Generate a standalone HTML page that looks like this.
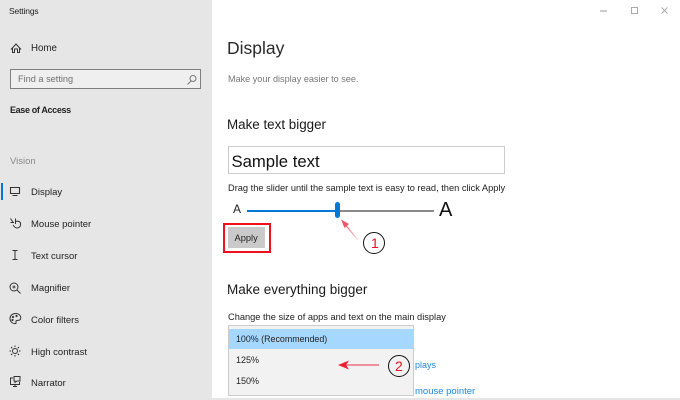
<!DOCTYPE html>
<html>
<head>
<meta charset="utf-8">
<style>
html,body{margin:0;padding:0;width:680px;height:400px;overflow:hidden;background:#fff}
body{position:relative;font-family:"Liberation Sans",sans-serif;color:#1a1a1a}
#wrap{position:absolute;left:0;top:0;width:680px;height:400px;filter:blur(.25px)}
.t{position:absolute;white-space:nowrap;line-height:1}
#side{position:absolute;left:0;top:0;width:212px;height:400px;background:#e6e6e6}
svg.abs{position:absolute;left:0;top:0}
</style>
</head>
<body>
<div id="wrap">
<div id="side"></div>
<div class="t" style="left:9px;top:7px;font-size:8.500px;letter-spacing:-.15px;color:#222">Settings</div>
<div class="t" style="left:31px;top:43.800px;font-size:9.700px;color:#222">Home</div>
<div style="position:absolute;left:10px;top:69px;width:189px;height:18px;border:1.5px solid #7f7f7f;background:#efefef"></div>
<div class="t" style="left:18px;top:74.500px;font-size:9.200px;color:#6f6f6f">Find a setting</div>
<div class="t" style="left:10px;top:106px;font-size:9px;font-weight:bold;color:#222;letter-spacing:-.35px">Ease of Access</div>
<div class="t" style="left:10px;top:157px;font-size:9.500px;color:#8a8a8a">Vision</div>
<div style="position:absolute;left:1px;top:183px;width:1.5px;height:17px;background:#0078d7"></div>
<div class="t" style="left:31px;top:187.500px;font-size:9.500px;color:#222">Display</div>
<div class="t" style="left:31px;top:219.500px;font-size:9.500px;color:#222">Mouse pointer</div>
<div class="t" style="left:31px;top:251.500px;font-size:9.500px;color:#222">Text cursor</div>
<div class="t" style="left:31px;top:283.500px;font-size:9.500px;color:#222">Magnifier</div>
<div class="t" style="left:31px;top:315.500px;font-size:9.500px;color:#222">Color filters</div>
<div class="t" style="left:31px;top:347.500px;font-size:9.500px;color:#222">High contrast</div>
<div class="t" style="left:31px;top:378.500px;font-size:9.500px;color:#222">Narrator</div>

<div class="t" style="left:227px;top:39.500px;font-size:17.500px;color:#2a2a2a">Display</div>
<div class="t" style="left:228px;top:75px;font-size:9.100px;color:#777">Make your display easier to see.</div>
<div class="t" style="left:227px;top:118px;font-size:13.400px;color:#1a1a1a">Make text bigger</div>
<div style="position:absolute;left:228px;top:146px;width:275px;height:26px;border:1.5px solid #ccc;background:#fff"></div>
<div class="t" style="left:231.500px;top:154px;font-size:16.700px;color:#111">Sample text</div>
<div class="t" style="left:228px;top:183.500px;font-size:9.270px;color:#222">Drag the slider until the sample text is easy to read, then click Apply</div>
<div class="t" style="left:233px;top:203px;font-size:12px;color:#222">A</div>
<div class="t" style="left:439px;top:200px;font-size:20px;color:#111">A</div>
<div style="position:absolute;left:247px;top:210px;width:88px;height:1.5px;background:#0078d7"></div>
<div style="position:absolute;left:337px;top:210px;width:97px;height:1.5px;background:#8a8a8a"></div>
<div style="position:absolute;left:334.500px;top:202px;width:5px;height:16px;border-radius:3px;background:#0078d7"></div>
<div style="position:absolute;left:223px;top:222.500px;width:47.500px;height:30.500px;box-sizing:border-box;box-shadow:inset 0 0 0 2px #f0101e"></div>
<div style="position:absolute;left:228px;top:227px;width:37px;height:21px;background:#cacaca"></div>
<div class="t" style="left:234.500px;top:234px;font-size:9.300px;color:#222">Apply</div>
<div class="t" style="left:227px;top:283px;font-size:13.500px;color:#1a1a1a">Make everything bigger</div>
<div class="t" style="left:228px;top:313px;font-size:9.270px;color:#222">Change the size of apps and text on the main display</div>
<div class="t" style="left:415px;top:361px;font-size:9px;color:#1e88e5">plays</div>
<div class="t" style="left:415px;top:387px;font-size:9.500px;color:#1e88e5">mouse pointer</div>
<div style="position:absolute;left:228px;top:325px;width:186px;height:71px;box-sizing:border-box;border:1px solid #ccc;background:#f2f2f2"></div>
<div style="position:absolute;left:229px;top:329px;width:184px;height:20px;background:#a6d8ff"></div>
<div class="t" style="left:236px;top:334.500px;font-size:8.900px;color:#222">100% (Recommended)</div>
<div class="t" style="left:236px;top:356px;font-size:9px;color:#222">125%</div>
<div class="t" style="left:236px;top:377px;font-size:9px;color:#222">150%</div>
<div style="position:absolute;left:212px;top:398px;width:468px;height:2px;background:#e6e6e6"></div>

<svg class="abs" width="680" height="400" viewBox="0 0 680 400" fill="none" stroke="#333" stroke-width="1">
<!-- Home -->
<path d="M11 49.500 16 44 21 49.500M12.500 48V52.500H14.500V49H17.500V52.500H19.500V48"/>
<!-- Search -->
<g stroke="#777"><circle cx="193" cy="78.500" r="3"/><path d="M191 81 187.500 84.500"/></g>
<!-- Display -->
<path d="M10.500 187.500H19.500V193.500H10.500Z" stroke-width="1.100"/><path d="M12.500 195.500H17.500"/>
<!-- Mouse pointer -->
<path d="M10.500 218.500 13.500 223M10.500 222.500H14M15.500 218.500V224M15.500 221.500C17.500 220.500 20.500 221.500 20.500 223.500V225C20.500 227 18.500 228 17 228C15.500 228 14 226.500 13 225"/>
<!-- Text cursor -->
<path d="M12.500 250.500H17.500M15 250.500V259.500M12.500 259.500H17.500"/>
<!-- Magnifier -->
<circle cx="14" cy="287" r="4"/><path d="M17 290 20.500 293.500M12.500 287H15.500M14 285.500V288.500"/>
<!-- Color filters -->
<path d="M15.500 313.500C19.500 313.500 21.500 316.500 20.500 319C20 321 17.500 320 16.500 320.500C15 321.500 17 323.500 15.500 323.500C12.500 324 10 321.500 10 318.500C10 315.500 12.500 313.500 15.500 313.500Z"/>
<circle cx="13" cy="317" r=".6"/><circle cx="16.500" cy="316" r=".6"/><circle cx="12.500" cy="320" r=".6"/>
<!-- High contrast -->
<circle cx="15" cy="351" r="2.500"/><path d="M15 345.500V347M15 355V356.500M9.500 351H11M19 351H20.500M11 347 12.300 348.300M17.700 353.700 19 355M19 347 17.700 348.300M12.300 353.700 11 355"/>
<!-- Narrator -->
<path d="M13 378H10.500V384.500H19.500V382M13 386.500H17M15 384.500V386.500M14 376.500H20V381H17L15 382.500V381H14Z"/>
<!-- Window controls -->
<path d="M600 11H607" stroke="#aaa" stroke-width="1.200"/>
<rect x="631.500" y="7.500" width="6" height="6" stroke="#aaa"/>
<path d="M661.500 7.500 667.500 13.500M667.500 7.500 661.500 13.500" stroke="#aaa"/>
<!-- Arrow 1 -->
<defs><linearGradient id="g" x1="358" y1="240" x2="342" y2="220" gradientUnits="userSpaceOnUse"><stop offset="0" stop-color="#fbdde0"/><stop offset="1" stop-color="#f0364a"/></linearGradient></defs>
<path d="M358 240 343 222" stroke="url(#g)" stroke-width="1.200"/>
<path d="M341 219.500 349 224 344.500 228Z" fill="#f0566a" stroke="none"/>
<circle cx="374" cy="243" r="10.500" stroke="#111"/>
<!-- Arrow 2 -->
<path d="M343 365H379" stroke="#f0566a" stroke-width="1.200"/>
<path d="M338 365 349 360.500 346 365 349 369.500Z" fill="#ee1c30" stroke="none"/>
<circle cx="399" cy="366" r="10.500" stroke="#111"/>
</svg>
<div class="t" style="left:371px;top:236px;font-size:14px;color:#e81123">1</div>
<div class="t" style="left:395px;top:359px;font-size:14px;color:#e81123">2</div>
</div>
</body>
</html>
